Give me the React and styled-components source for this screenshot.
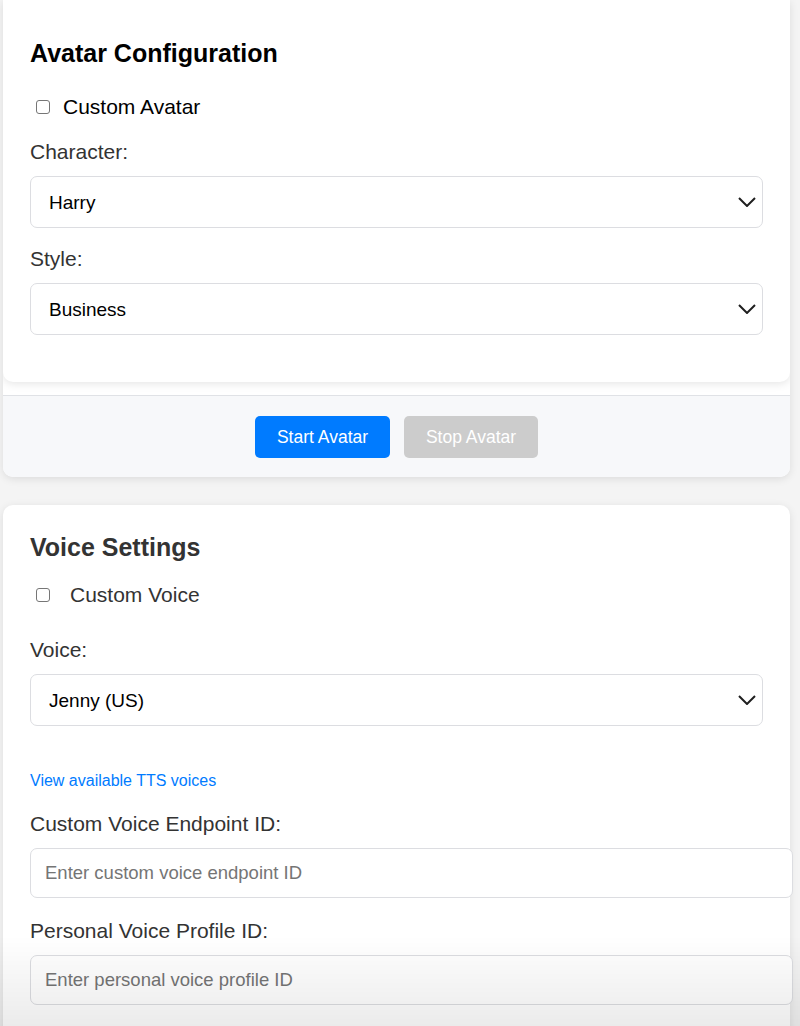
import React from "react";
import styled, { createGlobalStyle } from "styled-components";

const GlobalStyle = createGlobalStyle`
  body {
    margin: 0;
    background: #f4f4f4;
    font-family: "Liberation Sans", Arial, Helvetica, sans-serif;
  }
`;

const Chevron = () => (
  <ChevronIcon width="18" height="10" viewBox="0 0 18 10">
    <path d="M1 1 L9 9 L17 1" fill="none" stroke="#1f1f1f" strokeWidth="2" />
  </ChevronIcon>
);

const SelectField = ({ value }) => (
  <SelectWrap>
    <Select defaultValue={value}>
      <option>{value}</option>
    </Select>
    <Chevron />
  </SelectWrap>
);

const App = () => {
  return (
    <Page>
      <GlobalStyle />
      <Panel>
        <Card $top={38} $bottom={47} $flatTop>
          <Heading $dark>Avatar Configuration</Heading>
          <CheckRow $gap={13} $mt={27} $dark>
            <Checkbox type="checkbox" />
            Custom Avatar
          </CheckRow>
          <Label $mt={21}>Character:</Label>
          <SelectField value="Harry" />
          <Label $mt={19}>Style:</Label>
          <SelectField value="Business" />
        </Card>
        <Footer>
          <Button $primary>Start Avatar</Button>
          <Button disabled>Stop Avatar</Button>
        </Footer>
      </Panel>

      <Card $top={27} $bottom={60} $spaced>
        <Heading>Voice Settings</Heading>
        <CheckRow $gap={20} $mt={21}>
          <Checkbox type="checkbox" />
          Custom Voice
        </CheckRow>
        <Label $mt={31}>Voice:</Label>
        <SelectField value="Jenny (US)" />
        <Link href="#">View available TTS voices</Link>
        <Label $mt={21}>Custom Voice Endpoint ID:</Label>
        <TextInput placeholder="Enter custom voice endpoint ID" />
        <Label $mt={21}>Personal Voice Profile ID:</Label>
        <TextInput placeholder="Enter personal voice profile ID" />
      </Card>
      <BottomFade />
    </Page>
  );
};

export default App;

const Page = styled.div`
  padding: 0 10px 40px 3px;
  min-height: 100vh;
  box-sizing: border-box;
`;

const Panel = styled.div`
  background: #ffffff;
  border-radius: 0 0 10px 10px;
  box-shadow: 0 2px 8px rgba(0, 0, 0, 0.1);
  overflow: hidden;
`;

const Card = styled.div`
  background: #ffffff;
  padding: ${(p) => p.$top}px 27px ${(p) => p.$bottom}px;
  border-radius: ${(p) => (p.$flatTop ? "0 0 10px 10px" : "10px")};
  box-shadow: 0 2px 8px rgba(0, 0, 0, 0.1);
  margin-bottom: ${(p) => (p.$flatTop ? "13px" : "0")};
  margin-top: ${(p) => (p.$spaced ? "28px" : "0")};
  display: flex;
  flex-direction: column;
`;

const Heading = styled.h2`
  margin: 0;
  font-size: 25px;
  line-height: 30px;
  font-weight: bold;
  color: ${(p) => (p.$dark ? "#000" : "#333")};
`;

const CheckRow = styled.label`
  display: flex;
  align-items: center;
  gap: ${(p) => p.$gap}px;
  margin-top: ${(p) => p.$mt}px;
  padding-left: 6px;
  font-size: 21px;
  line-height: 24px;
  color: ${(p) => (p.$dark ? "#000" : "#333")};
`;

const Checkbox = styled.input`
  appearance: none;
  margin: 0;
  width: 14px;
  height: 14px;
  border: 1px solid #767676;
  border-radius: 3px;
  background: #fff;
  box-sizing: border-box;
`;

const Label = styled.label`
  display: block;
  margin-top: ${(p) => p.$mt}px;
  margin-bottom: 12px;
  font-size: 21px;
  line-height: 24px;
  color: #333;
`;

const SelectWrap = styled.div`
  position: relative;
  width: 100%;
`;

const Select = styled.select`
  appearance: none;
  width: 100%;
  height: 52px;
  box-sizing: border-box;
  padding: 0 40px 0 18px;
  border: 1px solid #dcdde1;
  border-radius: 7px;
  background: #fff;
  font-family: inherit;
  font-size: 19px;
  color: #000;
  outline: none;
`;

const ChevronIcon = styled.svg`
  position: absolute;
  right: 7px;
  top: 21px;
  pointer-events: none;
`;

const Link = styled.a`
  margin-top: 45px;
  font-size: 16px;
  line-height: 20px;
  color: #007bff;
  text-decoration: none;
  align-self: flex-start;
`;

const TextInput = styled.input`
  width: 100%;
  box-sizing: content-box;
  height: 48px;
  padding: 0 14px;
  border: 1px solid #dcdde1;
  border-radius: 7px;
  font-family: inherit;
  font-size: 18.5px;
  color: #000;
  outline: none;

  &::placeholder {
    color: #757575;
  }
`;

const Footer = styled.div`
  border-top: 1px solid #e0e2e6;
  background: #f7f8fa;
  padding: 20px 0 19px;
  display: flex;
  justify-content: center;
  gap: 14px;
`;

const Button = styled.button`
  height: 42px;
  width: ${(p) => (p.$primary ? "135px" : "134px")};
  border: none;
  border-radius: 5px;
  background: ${(p) => (p.$primary ? "#007bff" : "#cccccc")};
  color: #fff;
  font-family: inherit;
  font-size: 17.5px;
  cursor: ${(p) => (p.disabled ? "default" : "pointer")};
`;

const BottomFade = styled.div`
  position: fixed;
  left: 0;
  right: 0;
  bottom: 0;
  height: 90px;
  pointer-events: none;
  background: linear-gradient(to bottom, rgba(0, 0, 0, 0), rgba(0, 0, 0, 0.08));
`;
